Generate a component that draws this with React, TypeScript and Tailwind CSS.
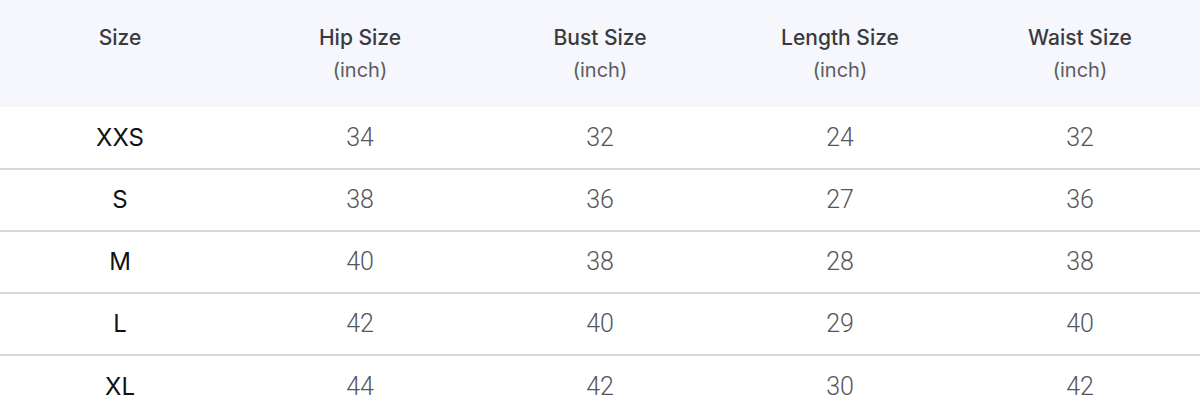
import React from "react";

const headers = [
  { title: "Size", unit: "" },
  { title: "Hip Size", unit: "(inch)" },
  { title: "Bust Size", unit: "(inch)" },
  { title: "Length Size", unit: "(inch)" },
  { title: "Waist Size", unit: "(inch)" },
];

const rows: [string, number, number, number, number][] = [
  ["XXS", 34, 32, 24, 32],
  ["S", 38, 36, 27, 36],
  ["M", 40, 38, 28, 38],
  ["L", 42, 40, 29, 40],
  ["XL", 44, 42, 30, 42],
];

export default function App() {
  return (
    <div className="w-[1200px] h-[419px] overflow-hidden bg-white">
      <div className="grid grid-cols-5 h-[107px] bg-[#f5f7fc]">
        {headers.map((h) => (
          <div
            key={h.title}
            className="flex flex-col items-center pt-[22px] leading-[32px] font-['Inter',sans-serif]"
          >
            <span className="text-[21px] font-medium text-[#3a3a40]">{h.title}</span>
            {h.unit && <span className="text-[20px] text-[#5c5c63]">{h.unit}</span>}
          </div>
        ))}
      </div>
      {rows.map((r, i) => (
        <div
          key={r[0]}
          className={`grid grid-cols-5 items-center ${
            i < rows.length - 1 ? "border-b-2 border-[#d8d8de]" : ""
          } ${i === 0 ? "h-[63px]" : "h-[62px]"}`}
        >
          <div className="text-center text-[24px] text-[#111] font-['Inter',sans-serif] font-normal">
            {r[0]}
          </div>
          {r.slice(1).map((v, j) => (
            <div
              key={j}
              className="text-center text-[25px] font-light text-[#55555c] font-['Roboto',sans-serif]"
            >
              {v}
            </div>
          ))}
        </div>
      ))}
    </div>
  );
}
